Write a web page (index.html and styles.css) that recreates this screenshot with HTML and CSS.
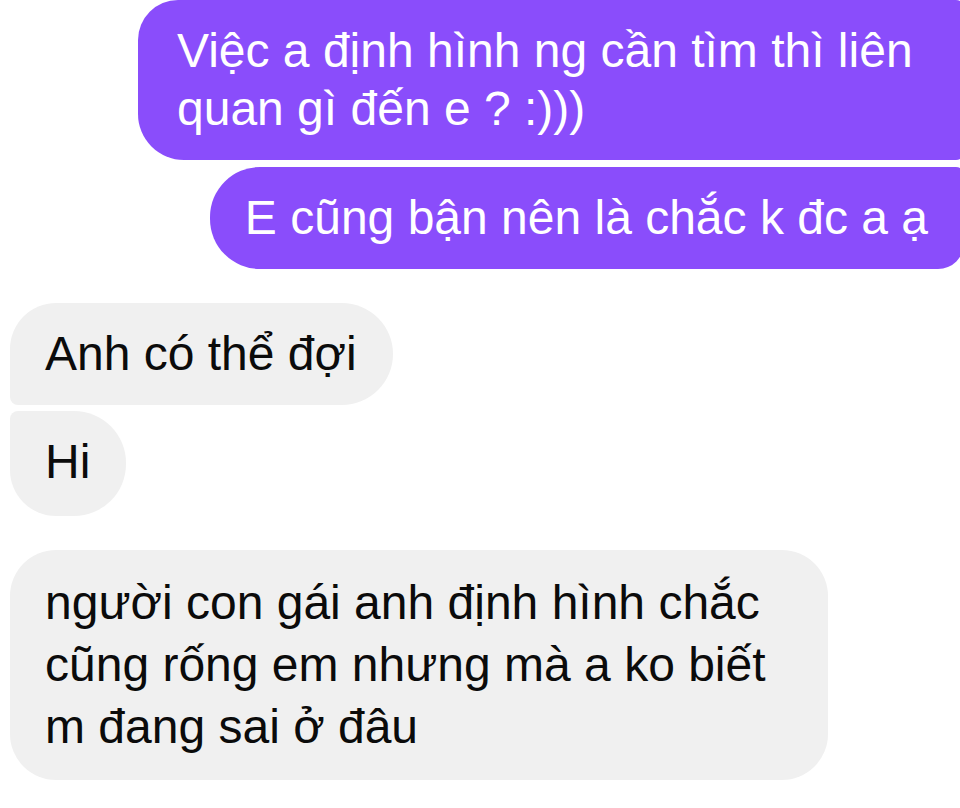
FILE: index.html
```html
<!DOCTYPE html>
<html lang="vi">
<head>
<meta charset="utf-8">
<title>Chat</title>
<link rel="stylesheet" href="styles.css">
</head>
<body>
<div class="chat">
  <div class="group out">
    <div class="bubble sent first">Việc a định hình ng cần tìm thì liên quan gì đến e ? :)))</div>
    <div class="bubble sent last">E cũng bận nên là chắc k đc a ạ</div>
  </div>
  <div class="group in">
    <div class="bubble recv first">Anh có thể đợi</div>
    <div class="bubble recv last">Hi</div>
  </div>
  <div class="group in">
    <div class="bubble recv single">người con gái anh định hình chắc cũng rống em nhưng mà a ko biết m đang sai ở đâu</div>
  </div>
</div>
</body>
</html>
```
FILE: styles.css
```css
html, body {
  margin: 0;
  padding: 0;
  background: #ffffff;
  overflow: hidden;
}

.chat {
  width: 964px;
  padding: 0 0 0 10px;
  box-sizing: border-box;
  display: flex;
  flex-direction: column;
  gap: 34px;
  font-family: "Liberation Sans", Arial, sans-serif;
  font-size: 48px;
  line-height: 58px;
}

.group {
  display: flex;
  flex-direction: column;
  gap: 7px;
}

.group.in {
  gap: 6px;
}

.group.out {
  align-items: flex-end;
}

.group.in {
  align-items: flex-start;
}

.bubble {
  padding: 22px 36px 22px 35px;
  box-sizing: border-box;
}

.sent {
  background: #8a4dfb;
  color: #ffffff;
}

.sent.first {
  max-width: 826px;
  padding-left: 39px;
  border-radius: 40px 8px 8px 46px;
}

.sent.last {
  border-radius: 50px 8px 26px 50px;
}

.recv {
  background: #f0f0f0;
  color: #0b0b0b;
}

.recv.first {
  border-radius: 46px 51px 51px 8px;
}

.recv.last {
  padding-bottom: 25px;
  border-radius: 8px 52px 52px 46px;
}

.recv.single {
  max-width: 818px;
  line-height: 62px;
  padding-top: 22px;
  padding-bottom: 22px;
  border-radius: 46px;
}
```
